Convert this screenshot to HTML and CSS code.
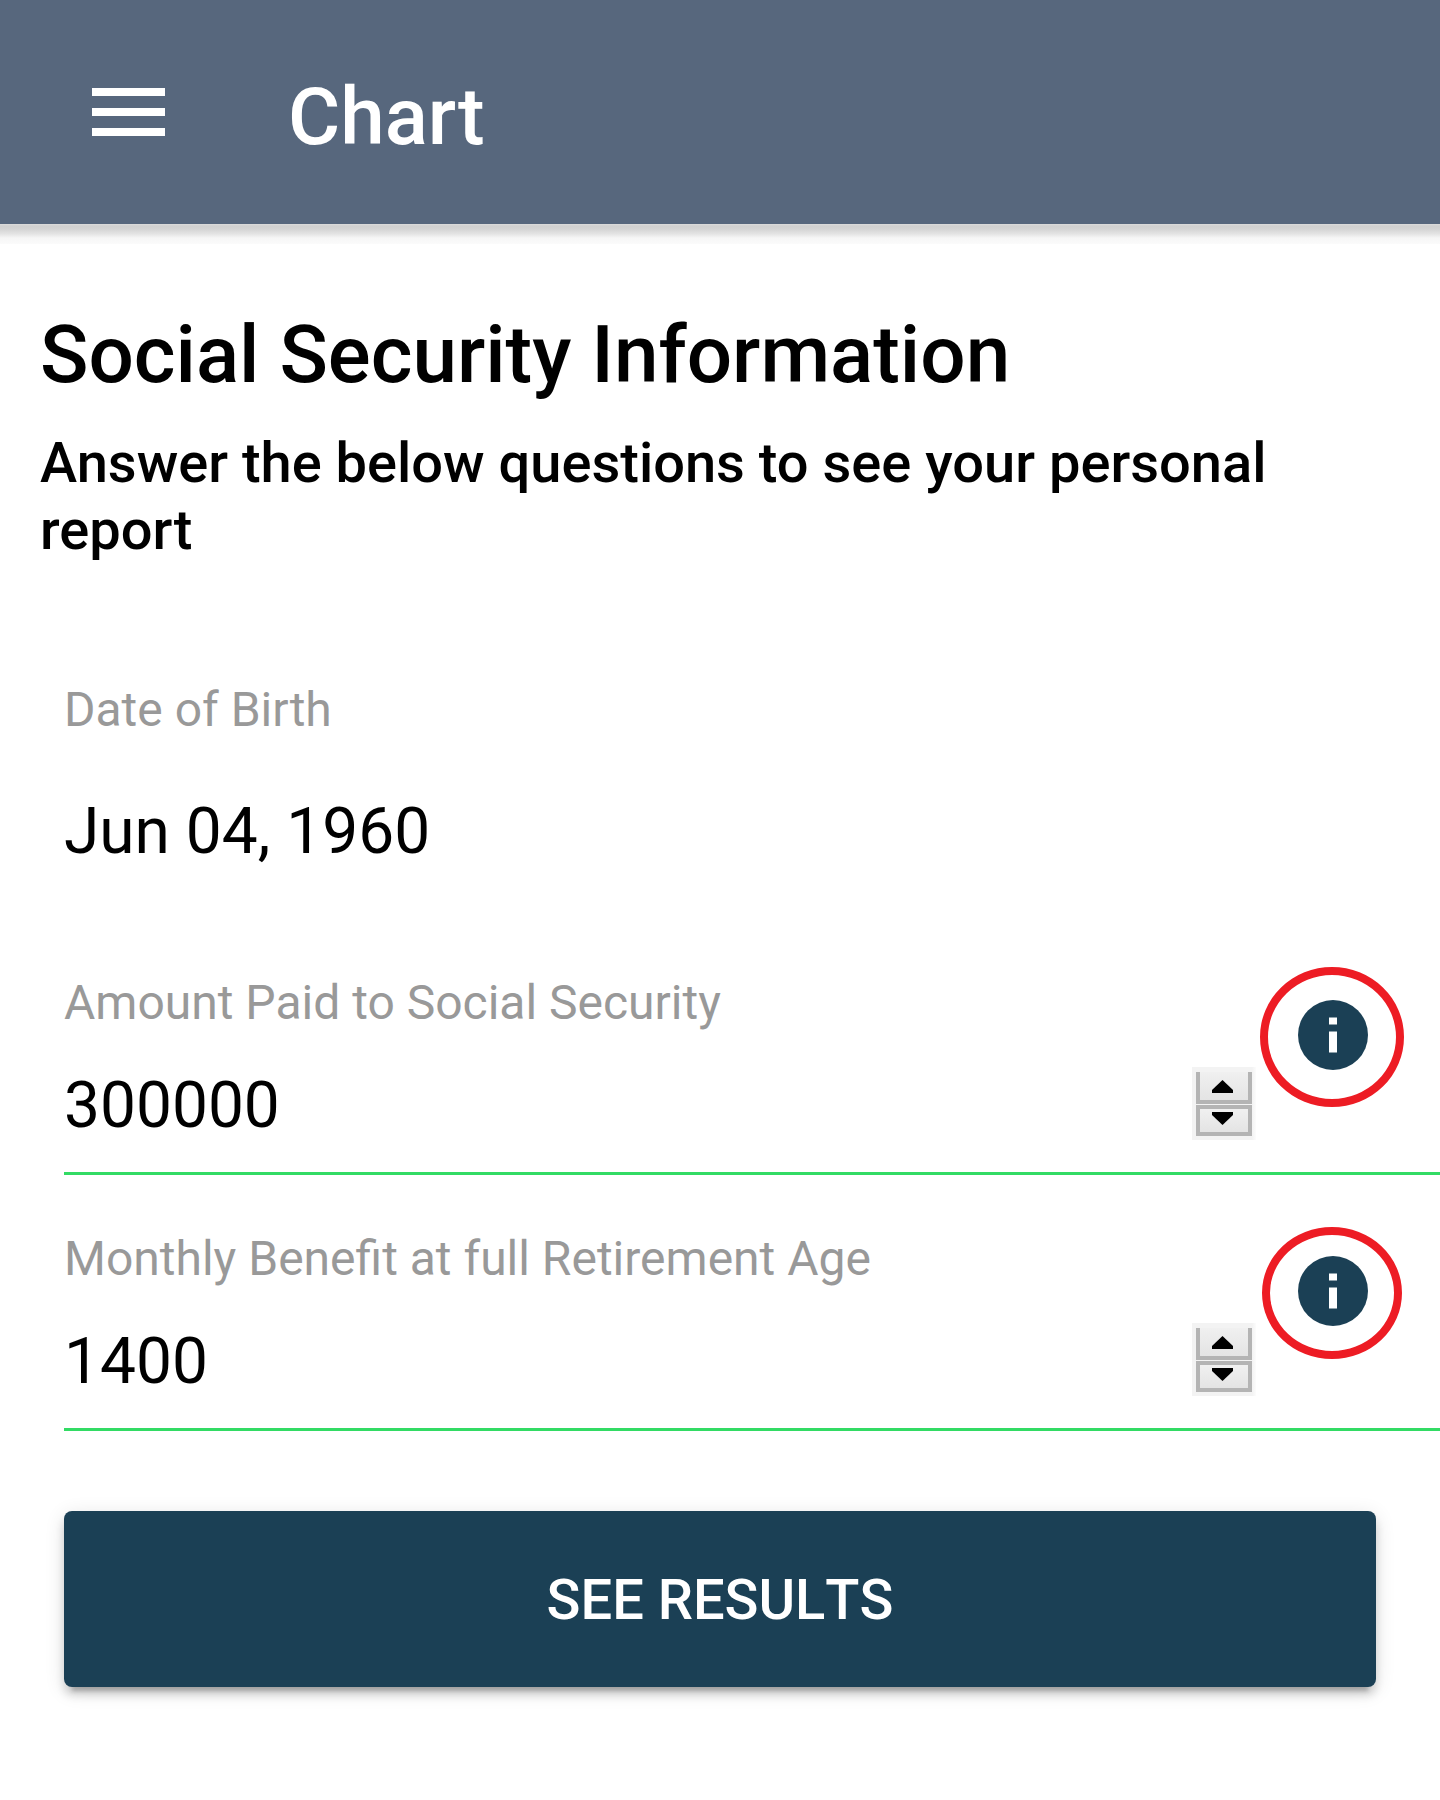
FILE: index.html
```html
<!DOCTYPE html>
<html lang="en">
<head>
<meta charset="utf-8">
<title>Chart</title>
<link rel="stylesheet" href="styles.css">
</head>
<body>
<header class="toolbar">
  <svg class="menu-icon" viewBox="0 0 73 48" fill="#fff"><path d="M0 0h73v8H0zM0 20h73v8H0zM0 40h73v8H0z"/></svg>
  <div class="toolbar-title">Chart</div>
</header>
<main class="content">
  <h1 class="heading">Social Security Information</h1>
  <h2 class="subheading">Answer the below questions to see your personal report</h2>
  <form class="form">
    <div class="date-field">
      <div class="label">Date of Birth</div>
      <div class="value date-value">Jun 04, 1960</div>
    </div>
    <div class="field">
      <div class="label">Amount Paid to Social Security</div>
      <div class="value">300000</div>
      <div class="spinner">
        <div class="step step-up"><svg class="arrow" viewBox="0 0 21 13"><path d="M10.500 0L21 10v3H0v-3z"/></svg></div>
        <div class="step step-down"><svg class="arrow" viewBox="0 0 21 13"><path d="M0 0h21v3L10.500 13 0 3z"/></svg></div>
      </div>
      <div class="info">
        <svg class="info-icon" viewBox="0 0 70 70"><circle cx="35" cy="35" r="35" fill="#1b4055"/><path d="M31 17.500h8v7h-8zM31 31.500h8v21h-8z" fill="#fff"/></svg>
        <span class="ring"></span>
      </div>
    </div>
    <div class="field">
      <div class="label">Monthly Benefit at full Retirement Age</div>
      <div class="value">1400</div>
      <div class="spinner">
        <div class="step step-up"><svg class="arrow" viewBox="0 0 21 13"><path d="M10.500 0L21 10v3H0v-3z"/></svg></div>
        <div class="step step-down"><svg class="arrow" viewBox="0 0 21 13"><path d="M0 0h21v3L10.500 13 0 3z"/></svg></div>
      </div>
      <div class="info">
        <svg class="info-icon" viewBox="0 0 70 70"><circle cx="35" cy="35" r="35" fill="#1b4055"/><path d="M31 17.500h8v7h-8zM31 31.500h8v21h-8z" fill="#fff"/></svg>
        <span class="ring ring-small"></span>
      </div>
    </div>
    <button class="submit" type="button">SEE RESULTS</button>
  </form>
</main>
</body>
</html>
```
FILE: styles.css
```css
* { box-sizing: border-box; }
body {
  margin: 0;
  height: 1800px;
  overflow: hidden;
  background: #fff;
  color: #000;
  font-family: Roboto, "Liberation Sans", sans-serif;
}
.toolbar {
  position: relative;
  display: flex;
  align-items: flex-start;
  height: 224px;
  padding: 69px 0 0 91.6px;
  background: #57677d;
}
.toolbar::after {
  content: "";
  position: absolute;
  top: 100%;
  left: 0;
  right: 0;
  height: 20px;
  background: linear-gradient(#dcdcdc 0, #d0d0d0 2px, #d4d4d4 5px, #e4e4e4 10px, #f6f6f6 14px, #fbfbfb 20px);
}
.menu-icon { width: 73px; height: 48px; margin-top: 19px; }
.toolbar-title {
  margin-left: 123.4px;
  color: #fff;
  font-size: 80px;
  font-weight: 500;
  line-height: 96px;
}
.content { padding-top: 83px; }
.heading, .subheading { margin: 0; padding: 0 40px; font-weight: 500; }
.heading { font-size: 80px; line-height: 96px; }
.subheading { margin-top: 27px; font-size: 56px; line-height: 67.2px; }
.form { padding-left: 64px; }
.date-field { height: 355px; padding-top: 118px; }
.label { font-size: 48px; line-height: 56px; color: #999; white-space: nowrap; }
.value { font-size: 64px; line-height: 76px; }
.date-value { margin-top: 56px; }
.field {
  display: grid;
  grid-template-columns: 1128px 64px 1fr;
  grid-template-rows: 56px 76px;
  row-gap: 36px;
  height: 256px;
  padding-top: 56px;
  border-bottom: 3px solid #32db64;
}
.field .label, .field .value { grid-column: 1; }
.field .value { padding-top: 1px; }
.spinner {
  grid-column: 2;
  grid-row: 2;
  display: flex;
  flex-direction: column;
  gap: 1px;
  height: 73px;
  padding: 5px 4px 4px 4px;
  background: linear-gradient(90deg, #f3f3f3 60px, #fcfcfc);
}
.step {
  display: flex;
  justify-content: center;
  height: 31px;
  border: 4px solid #b4b4b4;
  background: linear-gradient(#f0f0f0, #e4e4e4);
  filter: blur(.6px);
}
.step-up { height: 32px; border-top: 0; padding-top: 8px; }
.step-down { padding-top: 3px; }
.arrow { width: 21px; height: 13px; margin-right: 4px; }
.info {
  grid-column: 3;
  grid-row: 1 / 3;
  position: relative;
  width: 70px;
  height: 70px;
  margin: 25px 0 0 42px;
}
.info-icon { display: block; width: 70px; height: 70px; }
.ring {
  position: absolute;
  left: -38px;
  top: -33px;
  width: 144px;
  height: 140px;
  border: 8px solid #ed1c24;
  border-radius: 50%;
}
.ring-small { left: -36px; top: -29px; width: 140px; height: 132px; }
.submit {
  display: block;
  width: 1312px;
  height: 176px;
  margin-top: 80px;
  padding: 2px 0 0;
  border: 0;
  border-radius: 8px;
  background: #1b4055;
  box-shadow: 0 12px 4px -8px rgba(0,0,0,.2), 0 8px 8px rgba(0,0,0,.14), 0 4px 20px rgba(0,0,0,.12);
  color: #fff;
  font: 500 56px/1.2 Roboto, "Liberation Sans", sans-serif;
  font-kerning: none;
}
```
